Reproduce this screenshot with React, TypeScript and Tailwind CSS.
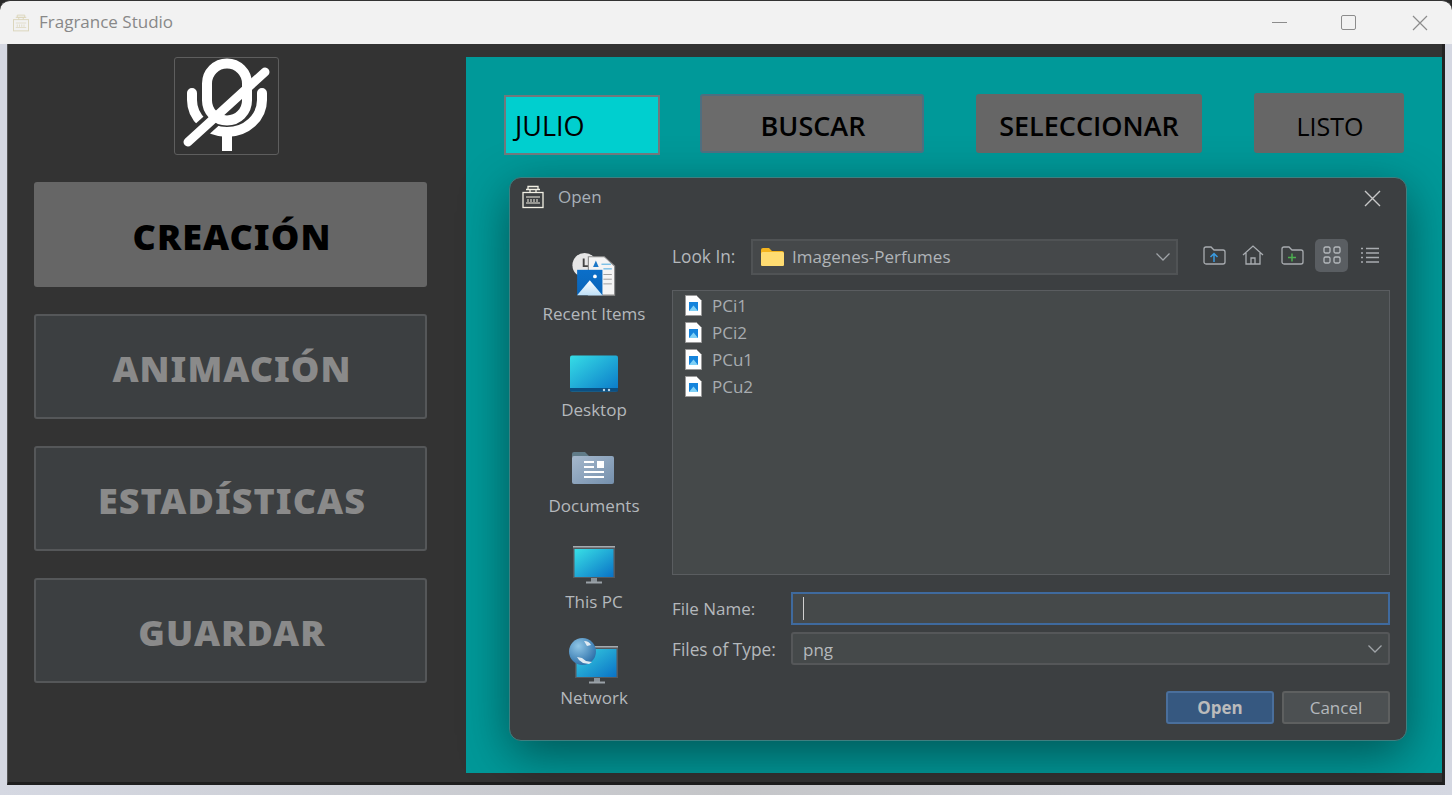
const PerfumeIcon = ({ color, size = 24 }: { color: string; size?: number }) => (
  <svg width={size} height={size} viewBox="0 0 24 24" fill="none" stroke={color} strokeWidth="1.300">
    <path d="M7 1.500h10v3h-10zM5 4.500h14M9 4.500v3M15 4.500v3" />
    <rect x="2" y="7.500" width="20" height="15" />
    <path d="M5 12h14M5 18h14M7 14v3M10 14v3M13 14v3M16 14v3" strokeWidth="1" />
  </svg>
);

const MicOff = () => (
  <svg width="103" height="96" viewBox="0 0 103 96" fill="none" strokeLinecap="round">
    <path d="M17 35V42A35 32 0 0 0 87 42V35" stroke="white" strokeWidth="10" />
    <path d="M52 74V93" stroke="white" strokeWidth="10" strokeLinecap="butt" />
    <path d="M13 84L44 56" stroke="#333333" strokeWidth="17" strokeLinecap="butt" />
    <rect x="32" y="5.500" width="40" height="57" rx="20" stroke="white" strokeWidth="10" />
    <path d="M13 84L90 14" stroke="white" strokeWidth="9" />
  </svg>
);

const RecentIcon = () => (
  <svg width="48" height="48" viewBox="0 0 48 48">
    <defs>
      <linearGradient id="pic" x1="0" y1="0" x2="0" y2="1">
        <stop offset="0" stopColor="#0b6fc9" />
        <stop offset="1" stopColor="#0a64b8" />
      </linearGradient>
      <linearGradient id="peak" x1="0" y1="0" x2="0" y2="1">
        <stop offset="0" stopColor="#ffffff" />
        <stop offset="1" stopColor="#bfe0f7" />
      </linearGradient>
    </defs>
    <circle cx="14" cy="14" r="13" fill="#e6e6e6" />
    <path d="M13 7v8h6" stroke="#444" strokeWidth="2" fill="none" />
    <path d="M18 5h17l11 10v31H18z" fill="#f4f4f4" stroke="#8a8a8a" strokeWidth="1.200" />
    <path d="M32 13h10M34 18h9" stroke="#3da5e0" strokeWidth="1" />
    <path d="M34 24h9M34 29h9M34 34h9" stroke="#9a9a9a" strokeWidth="1" />
    <path d="M26 9l3 7h-6z" fill="#1c78c8" />
    <rect x="6" y="19" width="27" height="27" fill="url(#pic)" />
    <path d="M6 46L19.500 30L33 46Z" fill="url(#peak)" />
    <circle cx="25" cy="26" r="2" fill="white" />
  </svg>
);

const DesktopIcon = () => (
  <svg width="48" height="37" viewBox="0 0 48 37">
    <defs>
      <linearGradient id="desk" x1="0" y1="0" x2="1" y2="1">
        <stop offset="0" stopColor="#36dde6" />
        <stop offset="1" stopColor="#0a78c8" />
      </linearGradient>
    </defs>
    <rect x="0" y="0.500" width="48" height="36" rx="2" fill="url(#desk)" />
    <rect x="0" y="33" width="48" height="3.500" fill="#0b4f82" />
    <circle cx="34" cy="35" r="1.200" fill="#b9d4e6" />
    <circle cx="39" cy="35" r="1.200" fill="#b9d4e6" />
  </svg>
);

const DocumentsIcon = () => (
  <svg width="44" height="34" viewBox="0 0 44 34">
    <defs>
      <linearGradient id="docs" x1="0" y1="0" x2="1" y2="1">
        <stop offset="0" stopColor="#a5b8cc" />
        <stop offset="1" stopColor="#7590ad" />
      </linearGradient>
    </defs>
    <path d="M0 3a2 2 0 0 1 2-2h11l5 5H0z" fill="#607b88" />
    <rect x="0" y="5" width="42" height="28" rx="2" fill="url(#docs)" />
    <path d="M12 11h10M12 16h10M12 21h20M12 26h20" stroke="white" strokeWidth="1.800" />
    <rect x="25" y="10" width="7" height="7" fill="white" />
  </svg>
);

const MonitorIcon = ({ id }: { id: string }) => (
  <svg width="42" height="38" viewBox="0 0 42 38">
    <defs>
      <linearGradient id={id} x1="0" y1="0" x2="1" y2="1">
        <stop offset="0" stopColor="#38e0e6" />
        <stop offset="1" stopColor="#0a72c6" />
      </linearGradient>
    </defs>
    <rect x="0" y="0" width="42" height="32" fill="#55595e" />
    <rect x="0" y="0" width="42" height="1.500" fill="#a6abb0" />
    <rect x="1.500" y="3" width="39" height="28" fill={`url(#${id})`} />
    <rect x="18" y="32" width="6" height="4" fill="#8a9299" />
    <rect x="13" y="35.500" width="16" height="2" fill="#9aa1a7" />
  </svg>
);

const NetworkIcon = () => (
  <svg width="50" height="47" viewBox="0 0 50 47">
    <defs>
      <linearGradient id="netscreen" x1="0" y1="0" x2="1" y2="1">
        <stop offset="0" stopColor="#38d0e0" />
        <stop offset="1" stopColor="#0a72c6" />
      </linearGradient>
      <radialGradient id="globe" cx="0.350" cy="0.300" r="0.800">
        <stop offset="0" stopColor="#8fc6e6" />
        <stop offset="1" stopColor="#2468a4" />
      </radialGradient>
    </defs>
    <rect x="6" y="8" width="43" height="32" fill="#55595e" />
    <rect x="6" y="8" width="43" height="1.500" fill="#a6abb0" />
    <rect x="7.500" y="11" width="40" height="28" fill="url(#netscreen)" />
    <rect x="25" y="40" width="6" height="4" fill="#8a9299" />
    <rect x="20" y="43.500" width="16" height="2" fill="#9aa1a7" />
    <circle cx="13.500" cy="13.500" r="13.500" fill="url(#globe)" />
    <path d="M8 19l5 1 4 3 6 1-3 2-6-1-4-3zM15 3q5 0 7 4l-4 1z" fill="#dfeaf2" />
  </svg>
);

const FileIcon = () => (
  <svg width="17" height="21" viewBox="0 0 17 21">
    <path d="M0.500 0.500H11.500L16.500 5.500V20.500H0.500Z" fill="white" stroke="#9a9a9a" />
    <rect x="4" y="7" width="9" height="9" fill="#1584dc" />
    <path d="M4 16L8.500 10.500L13 16Z" fill="#7fd0f5" />
  </svg>
);

const SideButton = ({ label, active }: { label: string; active?: boolean }) => (
  <div
    className={
      active
        ? "h-[105px] rounded-[3px] bg-[#666666] flex items-center justify-center pt-[5px] pl-[3px] text-[36px] font-black tracking-[1px] text-black"
        : "h-[105px] rounded-[3px] bg-[#3c3f41] border-2 border-[#555759] flex items-center justify-center pt-[5px] pl-[3px] text-[36px] font-black tracking-[1px] text-[#8a8a8a]"
    }
    style={{ fontFamily: '"Noto Sans", sans-serif' }}
  >
    {label}
  </div>
);

const PlaceItem = ({ icon, label, h, gap }: { icon: React.ReactNode; label: string; h: string; gap: string }) => (
  <div className={`${h} flex flex-col items-center justify-end`}>
    {icon}
    <span className={`${gap} text-[17px] leading-[24px] text-[#b4b8bc]`}>{label}</span>
  </div>
);

const files = ["PCi1", "PCi2", "PCu1", "PCu2"];

const Chevron = () => (
  <svg width="16" height="10" viewBox="0 0 16 10" fill="none" stroke="#a0a4a8" strokeWidth="1.300">
    <path d="M1.500 1.500L8 8L14.500 1.500" />
  </svg>
);

const ToolbarIcons = () => (
  <div className="ml-[20px] mb-[4px] flex items-center">
    <div className="w-[32px] h-[32px] flex items-center justify-center">
      <svg width="23" height="19" viewBox="0 0 23 19" fill="none" stroke="#a8acb0" strokeWidth="1.300">
        <path d="M1 3a2 2 0 0 1 2-2h5l3 3h9a2 2 0 0 1 2 2v10a2 2 0 0 1-2 2H3a2 2 0 0 1-2-2z" />
        <path d="M11 16V8M7.500 11L11 7.500L14.500 11" stroke="#3a9be0" strokeWidth="1.500" />
      </svg>
    </div>
    <div className="ml-[7px] w-[32px] h-[32px] flex items-center justify-center">
      <svg width="22" height="20" viewBox="0 0 22 20" fill="none" stroke="#a8acb0" strokeWidth="1.300">
        <path d="M1 10L11 1L21 10M4 8V19H18V8M9 19V13H13V19" />
      </svg>
    </div>
    <div className="ml-[7px] w-[32px] h-[32px] flex items-center justify-center">
      <svg width="23" height="19" viewBox="0 0 23 19" fill="none" stroke="#a8acb0" strokeWidth="1.300">
        <path d="M1 3a2 2 0 0 1 2-2h5l3 3h9a2 2 0 0 1 2 2v10a2 2 0 0 1-2 2H3a2 2 0 0 1-2-2z" />
        <path d="M11 7.500V15.500M7 11.500H15" stroke="#4caf50" strokeWidth="1.500" />
      </svg>
    </div>
    <div className="ml-[7px] w-[33px] h-[33px] rounded-[5px] bg-[#5a5e62] flex items-center justify-center">
      <svg width="18" height="18" viewBox="0 0 18 18" fill="none" stroke="#b4b8bc" strokeWidth="1.300">
        <rect x="1" y="1" width="6" height="6" rx="1.500" />
        <rect x="11" y="1" width="6" height="6" rx="1.500" />
        <rect x="1" y="11" width="6" height="6" rx="1.500" />
        <rect x="11" y="11" width="6" height="6" rx="1.500" />
      </svg>
    </div>
    <div className="ml-[6px] w-[32px] h-[32px] flex items-center justify-center">
      <svg width="18" height="16" viewBox="0 0 18 16" fill="none" stroke="#a8acb0" strokeWidth="1.300">
        <path d="M0 1.500H2M5 1.500H18M0 6H2M5 6H18M0 10.500H2M5 10.500H18M0 15H2M5 15H18" />
      </svg>
    </div>
  </div>
);

const OpenDialog = () => (
  <div className="mt-[22px] ml-[5px] w-[898px] h-[564px] rounded-[12px] border border-[#3f7f80] bg-[#3c3f41] shadow-[0_14px_50px_rgba(0,0,0,0.45)] flex flex-col text-[#b4b8bc]">
    <div className="h-[42px] shrink-0 pl-[11px] pr-[25px] pb-[4px] flex items-center">
      <PerfumeIcon color="#f2f0e4" />
      <span className="ml-[13px] text-[17px] text-[#a8b0b8]">Open</span>
      <svg className="ml-auto mt-[3px]" width="17" height="17" viewBox="0 0 17 17" fill="none" stroke="#c8c8c8" strokeWidth="1.400">
        <path d="M1 1L16 16M16 1L1 16" />
      </svg>
    </div>
    <div className="flex flex-1 min-h-0">
      <div className="w-[162px] shrink-0 flex flex-col items-center pl-[6px] pt-[32px]">
        <PlaceItem h="h-[74px]" gap="mt-[5px]" icon={<RecentIcon />} label="Recent Items" />
        <PlaceItem h="h-[96px]" gap="mt-[6px]" icon={<DesktopIcon />} label="Desktop" />
        <PlaceItem h="h-[96px]" gap="mt-[9px]" icon={<DocumentsIcon />} label="Documents" />
        <PlaceItem h="h-[96px]" gap="mt-[6px]" icon={<MonitorIcon id="pc" />} label="This PC" />
        <PlaceItem h="h-[96px]" gap="mt-[1px]" icon={<NetworkIcon />} label="Network" />
      </div>
      <div className="flex-1 min-w-0 pr-[16px] pt-[19px] flex flex-col">
        <div className="flex items-center h-[36px]">
          <span className="w-[79px] text-[17.300px]">Look In:</span>
          <div className="w-[427px] h-[36px] border-2 border-[#505355] bg-[#45484a] flex items-center pl-[8px] pr-[5px]">
            <svg width="23" height="18" viewBox="0 0 23 18">
              <path d="M0 2a2 2 0 0 1 2-2h6l3 3h10a2 2 0 0 1 2 2v11a2 2 0 0 1-2 2H2a2 2 0 0 1-2-2z" fill="#f5b41e" />
              <rect x="0" y="4" width="23" height="14" rx="1.500" fill="#ffdc72" />
            </svg>
            <span className="ml-[8px] text-[17px] text-[#b0b4b8]">Imagenes-Perfumes</span>
            <span className="ml-auto flex"><Chevron /></span>
          </div>
          <ToolbarIcons />
        </div>
        <div className="mt-[15px] h-[285px] border border-[#5a5d60] bg-[#45494a] pl-[12px] pt-[1px]">
          {files.map((name) => (
            <div key={name} className="h-[27px] flex items-center">
              <FileIcon />
              <span className="ml-[10px] text-[17px] text-[#a8acb0]">{name}</span>
            </div>
          ))}
        </div>
        <div className="mt-[17px] flex items-center">
          <span className="w-[119px] text-[17px]">File Name:</span>
          <div className="flex-1 h-[33px] border-2 border-[#3f6a9e] bg-[#45494a] flex items-center pl-[10px]">
            <div className="w-px h-[23px] bg-[#d0d0d0]" />
          </div>
        </div>
        <div className="mt-[7px] flex items-center">
          <span className="w-[119px] pt-[2px] text-[17.300px]">Files of Type:</span>
          <div className="flex-1 h-[33px] rounded-[3px] border-2 border-[#555759] bg-[#45494a] flex items-center pl-[10px] pr-[5px]">
            <span className="pt-[2px] text-[17px]">png</span>
            <span className="ml-auto flex"><Chevron /></span>
          </div>
        </div>
        <div className="mt-[26px] flex justify-end gap-[8px]">
          <div className="w-[108px] h-[33px] rounded-[3px] border-2 border-[#4a6f9c] bg-[#365880] flex items-center justify-center text-[17px] font-bold text-[#bbbbbb]">
            Open
          </div>
          <div className="w-[108px] h-[33px] rounded-[3px] border-2 border-[#5e6060] bg-[#4c5052] flex items-center justify-center text-[17px] text-[#b4b8bc]">
            Cancel
          </div>
        </div>
      </div>
    </div>
  </div>
);

export default function App() {
  return (
    <div
      className="w-[1452px] h-[795px] bg-[#d5d8e2] overflow-hidden flex flex-col"
      style={{ fontFamily: '"Open Sans", "Noto Sans", sans-serif' }}
    >
      {/* barra de titulo */}
      <div className="h-[44px] shrink-0 bg-[#2a2a2a]">
        <div className="h-[44px] rounded-t-[10px] bg-[#f2f2f2] border-t border-[#333333] flex items-center pl-[12px]">
          <PerfumeIcon color="#dcd6bc" size={18} />
          <span className="ml-[9px] -mt-[2px] text-[17px] text-[#888888]">Fragrance Studio</span>
          <div className="ml-auto flex items-center">
            <div className="w-[61px] flex justify-center">
              <div className="w-[15px] h-px bg-[#8c8c8c]" />
            </div>
            <div className="w-[77px] flex justify-center">
              <div className="w-[15px] h-[15px] rounded-[2px] border-[1.500px] border-[#8c8c8c]" />
            </div>
            <div className="w-[65px] flex justify-center">
              <svg width="16" height="16" viewBox="0 0 16 16" fill="none" stroke="#8c8c8c" strokeWidth="1.200">
                <path d="M1 1L15 15M15 1L1 15" />
              </svg>
            </div>
          </div>
        </div>
      </div>
      {/* ventana */}
      <div className="ml-[7px] mr-[7px] h-[741px] shrink-0 bg-[#333333] border-l border-[#555555] border-r-[3px] border-r-[#222222] border-b-[3px] border-b-[#1e1e1e] flex">
        <div className="w-[458px] shrink-0 flex flex-col pl-[26px] pr-[39px] pt-[13px]">
          <div className="self-center w-[105px] h-[98px] border border-[#5e5e5e] rounded-[3px] flex items-center justify-center -translate-x-[4px]">
            <MicOff />
          </div>
          <div className="mt-[27px] flex flex-col gap-[27px]">
            <SideButton label="CREACIÓN" active />
            <SideButton label="ANIMACIÓN" />
            <SideButton label="ESTADÍSTICAS" />
            <SideButton label="GUARDAR" />
          </div>
        </div>
        <div className="mt-[13px] mb-[9px] flex-1 bg-[#009999] pl-[38px] pt-[36px]">
          <div className="flex items-start">
            <div className="mt-[2px] w-[156px] h-[60px] border-2 border-[#72787c] bg-[#00cfcf] flex items-center pl-[9px] pt-[2px] text-[27px] text-black">
              JULIO
            </div>
            <div className="ml-[40px] mt-[1px] w-[224px] h-[59px] rounded-[3px] border-2 border-[#4d6f80] bg-[#6b6b6b] flex items-center justify-center pt-[6px] pl-[2px] text-[27px] font-semibold text-black">
              BUSCAR
            </div>
            <div className="ml-[52px] mt-[1px] w-[226px] h-[59px] rounded-[3px] bg-[#666666] flex items-center justify-center pt-[6px] text-[27px] font-semibold text-black">
              SELECCIONAR
            </div>
            <div className="ml-[52px] w-[150px] h-[60px] rounded-[3px] bg-[#666666] flex items-center justify-center pt-[7px] pl-[2px] text-[25px] text-black">
              LISTO
            </div>
          </div>
          <OpenDialog />
        </div>
      </div>
      <div className="flex-1 bg-gradient-to-r from-[#d5d8e2] via-[#c4c5c8] to-[#d5d8e2]" />
    </div>
  );
}
